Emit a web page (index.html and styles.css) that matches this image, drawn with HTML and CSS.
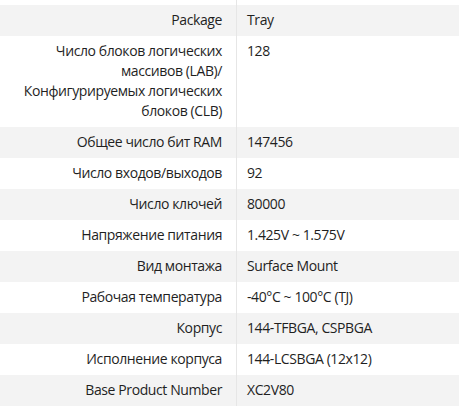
FILE: index.html
```html
<!DOCTYPE html>
<html lang="ru">
<head>
<meta charset="utf-8">
<link rel="stylesheet" href="styles.css">
</head>
<body>
<table class="specs">
  <colgroup><col class="col-label"><col class="col-value"></colgroup>
  <tbody>
    <tr class="spacer"><td class="label"></td><td class="value"></td></tr>
    <tr class="odd"><td class="label">Package</td><td class="value">Tray</td></tr>
    <tr><td class="label">Число блоков логических массивов (LAB)/ Конфигурируемых логических блоков (CLB)</td><td class="value">128</td></tr>
    <tr class="odd"><td class="label">Общее число бит RAM</td><td class="value">147456</td></tr>
    <tr><td class="label">Число входов/выходов</td><td class="value">92</td></tr>
    <tr class="odd"><td class="label">Число ключей</td><td class="value">80000</td></tr>
    <tr><td class="label">Напряжение питания</td><td class="value">1.425V ~ 1.575V</td></tr>
    <tr class="odd"><td class="label">Вид монтажа</td><td class="value">Surface Mount</td></tr>
    <tr><td class="label">Рабочая температура</td><td class="value">-40°C ~ 100°C (TJ)</td></tr>
    <tr class="odd"><td class="label">Корпус</td><td class="value">144-TFBGA, CSPBGA</td></tr>
    <tr><td class="label">Исполнение корпуса</td><td class="value">144-LCSBGA (12x12)</td></tr>
    <tr class="odd"><td class="label">Base Product Number</td><td class="value">XC2V80</td></tr>
  </tbody>
</table>
</body>
</html>
```
FILE: styles.css
```css
html, body {
  margin: 0;
  padding: 0;
  background: #ffffff;
}
body {
  font-family: "Open Sans", "Noto Sans", sans-serif;
  font-size: 14px;
  letter-spacing: -0.4px;
  color: #1f1f1f;
}
.specs {
  width: 459px;
  border-collapse: separate;
  border-spacing: 0;
  table-layout: fixed;
}
.col-label {
  width: 236px;
}
.specs td {
  box-sizing: border-box;
  line-height: 20px;
  padding: 5px 0 6px 0;
  vertical-align: top;
}
.specs .label {
  padding-left: 10px;
  padding-right: 14px;
  text-align: right;
}
.specs .value {
  border-left: 1px solid #e6e6e6;
  padding-left: 10px;
  text-align: left;
}
.specs .spacer td {
  height: 5px;
  padding: 0;
  line-height: 0;
}
.specs .odd td {
  background: #f3f3f3;
}
```
